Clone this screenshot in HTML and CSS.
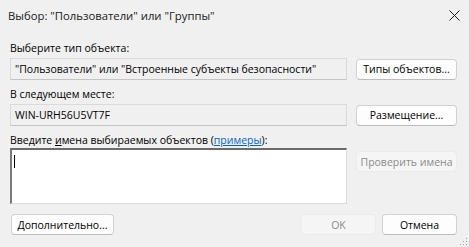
FILE: index.html
```html
<!DOCTYPE html>
<html lang="ru">
<head>
  <meta charset="UTF-8" />
  <title>Выбор: "Пользователи" или "Группы"</title>
  <link rel="stylesheet" href="styles.css">
</head>
<body>
  <div class="dialog">
    <div class="titlebar">
      <span class="title">Выбор: "Пользователи" или "Группы"</span>
      <svg class="close" width="11" height="11" viewBox="0 0 11 11">
        <path d="M0.5 0.5 L10.5 10.5 M10.5 0.5 L0.5 10.5" stroke="#1a1a1a" stroke-width="1" fill="none" />
      </svg>
    </div>

    <div class="content">
      <div class="label">Выберите тип объекта:</div>
      <div class="row">
        <div class="field">"Пользователи" или "Встроенные субъекты безопасности"</div>
        <button class="btn">Типы объектов...</button>
      </div>

      <div class="label">В следующем месте:</div>
      <div class="row">
        <div class="field">WIN-URH56U5VT7F</div>
        <button class="btn">Размещение...</button>
      </div>

      <div class="label spaced">Введите <u>и</u>мена выбираемых объектов (<a href="#">примеры</a>):</div>
      <div class="row top">
        <div class="names"><span class="caret"></span></div>
        <button class="btn disabled">Проверить имена</button>
      </div>

      <div class="footer">
        <button class="btn wide">Дополнительно...</button>
        <div class="actions">
          <button class="btn small disabled">OK</button>
          <button class="btn small">Отмена</button>
        </div>
      </div>
    </div>

    <svg class="grip" width="8" height="8" viewBox="0 0 8 8">
      <rect x="6" y="0" width="1" height="1" fill="#a0a0a0" />
      <rect x="3" y="3" width="1" height="1" fill="#a0a0a0" />
      <rect x="6" y="3" width="1" height="1" fill="#a0a0a0" />
      <rect x="0" y="6" width="1" height="1" fill="#a0a0a0" />
      <rect x="3" y="6" width="1" height="1" fill="#a0a0a0" />
      <rect x="6" y="6" width="1" height="1" fill="#a0a0a0" />
    </svg>
  </div>
</body>
</html>
```

FILE: styles.css
```css
html, body {
  margin: 0;
  padding: 0;
}
* {
  box-sizing: border-box;
}
body {
  font-family: 'Open Sans', 'Noto Sans', sans-serif;
  background: #f0f0f0;
  color: #000;
  width: 469px;
  height: 247px;
  overflow: hidden;
}
.dialog {
  position: relative;
  height: 247px;
}
.titlebar {
  height: 30px;
  display: flex;
  align-items: center;
  justify-content: space-between;
  padding: 0 9px 0 8px;
}
.title {
  font-size: 11.3px;
  color: #1a1a1a;
}
.content {
  padding: 10px 12px 0 10px;
  font-size: 10.5px;
}
.label {
  height: 16px;
  line-height: 16px;
  margin-bottom: 2px;
}
.label.spaced {
  margin-top: 5px;
  margin-bottom: 0;
}
.row {
  display: flex;
  align-items: center;
  gap: 9px;
  margin-bottom: 6px;
}
.row.top {
  align-items: flex-start;
  margin-bottom: 10px;
}
.field {
  flex: 1;
  height: 22px;
  line-height: 20px;
  padding: 0 4px;
  border: 1px solid #dadada;
  border-bottom-color: #c4c4c4;
  white-space: nowrap;
  overflow: hidden;
}
.btn {
  font-family: inherit;
  font-size: 10.5px;
  color: #000;
  width: 101px;
  height: 21px;
  padding: 0;
  background: #fdfdfd;
  border: 1px solid #d1d1d1;
  border-bottom-color: #bcbcbc;
  border-radius: 4px;
}
.btn.disabled {
  background: #f5f5f5;
  color: #8c8c8c;
  border-color: #ebebeb;
}
.names {
  flex: 1;
  height: 56px;
  background: #fff;
  border-top: 2px solid #6b6b6b;
  border-left: 2px solid #7a7a7a;
  border-right: 1px solid #dcdcdc;
  border-bottom: 1px solid #dcdcdc;
  padding: 5px 0 0 2px;
}
.row.top .btn {
  margin-top: 3px;
}
.caret {
  display: block;
  width: 1px;
  height: 13px;
  background: #000;
}
a {
  color: #0066cc;
}
.footer {
  display: flex;
  justify-content: space-between;
}
.actions {
  display: flex;
  gap: 6px;
}
.btn.wide {
  width: 103px;
  margin-left: 1px;
}
.btn.small {
  width: 75px;
}
.grip {
  position: absolute;
  right: 1px;
  bottom: 1px;
}
```
